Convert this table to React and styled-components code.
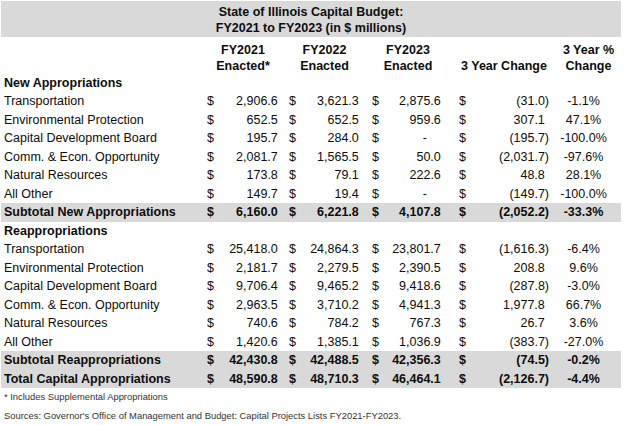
import React from 'react';
import styled, { createGlobalStyle } from 'styled-components';

const GlobalStyle = createGlobalStyle`
  html, body {
    margin: 0;
    padding: 0;
    background: #ffffff;
  }
  body {
    font-family: "Liberation Sans", Arial, sans-serif;
    color: #0d0d0d;
  }
`;

const COLS = '204px 82px 83px 86px 100px 65px';
const SHADE = '#d9d9d9';

const Sheet = styled.div`
  width: 620px;
  padding: 1px 0 0 1px;
  font-size: 12.5px;
`;

const TitleBand = styled.div`
  background: ${SHADE};
  padding: 3px 0 1px;
  text-align: center;
  font-weight: 700;
  line-height: 16px;
`;

const HeaderRow = styled.div`
  display: grid;
  grid-template-columns: ${COLS};
  padding: 3px 0 0;
  height: 36.75px;
  box-sizing: border-box;
  font-weight: 700;
  line-height: 16px;
`;

const HeadCell = styled.div`
  display: flex;
  flex-direction: column;
  justify-content: flex-end;
  align-items: center;
  text-align: center;
  padding-right: ${(p) => p.$shift || 0}px;
`;

const Row = styled.div`
  display: grid;
  grid-template-columns: ${COLS};
  height: 18.5px;
  line-height: 18.5px;
  background: ${(p) => (p.$shade ? SHADE : 'transparent')};
  font-weight: ${(p) => (p.$bold ? 700 : 400)};
  white-space: nowrap;
`;

const Label = styled.div`
  padding-left: 3px;
  grid-column: ${(p) => (p.$span ? '1 / -1' : 'auto')};
`;

const Money = styled.div`
  display: flex;
  justify-content: space-between;
  padding-left: ${(p) => p.$left}px;
  padding-right: ${(p) => p.$right}px;
`;

const Value = styled.span`
  padding-right: ${(p) => (p.$paren ? 0 : 4.2)}px;
`;

const Dash = styled.span`
  padding-right: 18px;
`;

const Pct = styled.div`
  display: flex;
  justify-content: center;
  padding-right: 10px;
`;

const Note = styled.div`
  height: 18.5px;
  line-height: 18.5px;
  padding-left: 3px;
  font-size: 9.4px;
  color: #333333;
`;

const moneyPads = [
  { left: 2, right: 5 },
  { left: 2, right: 7 },
  { left: 2, right: 11 },
  { left: 3, right: 7 },
];

function MoneyCell({ v, idx }) {
  const pad = moneyPads[idx];
  const paren = v.startsWith('(');
  return (
    <Money $left={pad.left} $right={pad.right}>
      <span>$</span>
      {v === '-' ? <Dash>-</Dash> : <Value $paren={paren}>{v}</Value>}
    </Money>
  );
}

function DataRow({ row, bold, shade }) {
  const [label, a, b, c, d, pct] = row;
  return (
    <Row $bold={bold} $shade={shade}>
      <Label>{label}</Label>
      <MoneyCell v={a} idx={0} />
      <MoneyCell v={b} idx={1} />
      <MoneyCell v={c} idx={2} />
      <MoneyCell v={d} idx={3} />
      <Pct>{pct}</Pct>
    </Row>
  );
}

const newRows = [
  ['Transportation', '2,906.6', '3,621.3', '2,875.6', '(31.0)', '-1.1%'],
  ['Environmental Protection', '652.5', '652.5', '959.6', '307.1', '47.1%'],
  ['Capital Development Board', '195.7', '284.0', '-', '(195.7)', '-100.0%'],
  ['Comm. & Econ. Opportunity', '2,081.7', '1,565.5', '50.0', '(2,031.7)', '-97.6%'],
  ['Natural Resources', '173.8', '79.1', '222.6', '48.8', '28.1%'],
  ['All Other', '149.7', '19.4', '-', '(149.7)', '-100.0%'],
];

const reRows = [
  ['Transportation', '25,418.0', '24,864.3', '23,801.7', '(1,616.3)', '-6.4%'],
  ['Environmental Protection', '2,181.7', '2,279.5', '2,390.5', '208.8', '9.6%'],
  ['Capital Development Board', '9,706.4', '9,465.2', '9,418.6', '(287.8)', '-3.0%'],
  ['Comm. & Econ. Opportunity', '2,963.5', '3,710.2', '4,941.3', '1,977.8', '66.7%'],
  ['Natural Resources', '740.6', '784.2', '767.3', '26.7', '3.6%'],
  ['All Other', '1,420.6', '1,385.1', '1,036.9', '(383.7)', '-27.0%'],
];

export default function App() {
  return (
    <>
      <GlobalStyle />
      <Sheet>
        <TitleBand>
          <div>State of Illinois Capital Budget:</div>
          <div>FY2021 to FY2023 (in $ millions)</div>
        </TitleBand>
        <HeaderRow>
          <div />
          <HeadCell $shift={6}>
            <div>FY2021</div>
            <div>Enacted*</div>
          </HeadCell>
          <HeadCell $shift={8}>
            <div>FY2022</div>
            <div>Enacted</div>
          </HeadCell>
          <HeadCell $shift={10}>
            <div>FY2023</div>
            <div>Enacted</div>
          </HeadCell>
          <HeadCell $shift={4}>
            <div>3 Year Change</div>
          </HeadCell>
          <HeadCell $shift={0}>
            <div>3 Year %</div>
            <div>Change</div>
          </HeadCell>
        </HeaderRow>

        <Row $bold>
          <Label $span>New Appropriations</Label>
        </Row>
        {newRows.map((r) => (
          <DataRow key={'n' + r[0]} row={r} />
        ))}
        <DataRow
          bold
          shade
          row={['Subtotal New Appropriations', '6,160.0', '6,221.8', '4,107.8', '(2,052.2)', '-33.3%']}
        />

        <Row $bold>
          <Label $span>Reappropriations</Label>
        </Row>
        {reRows.map((r) => (
          <DataRow key={'r' + r[0]} row={r} />
        ))}
        <DataRow
          bold
          shade
          row={['Subtotal Reappropriations', '42,430.8', '42,488.5', '42,356.3', '(74.5)', '-0.2%']}
        />
        <DataRow
          bold
          shade
          row={['Total Capital Appropriations', '48,590.8', '48,710.3', '46,464.1', '(2,126.7)', '-4.4%']}
        />

        <Note>* Includes Supplemental Appropriations</Note>
        <Note>Sources: Governor's Office of Management and Budget: Capital Projects Lists FY2021-FY2023.</Note>
      </Sheet>
    </>
  );
}
